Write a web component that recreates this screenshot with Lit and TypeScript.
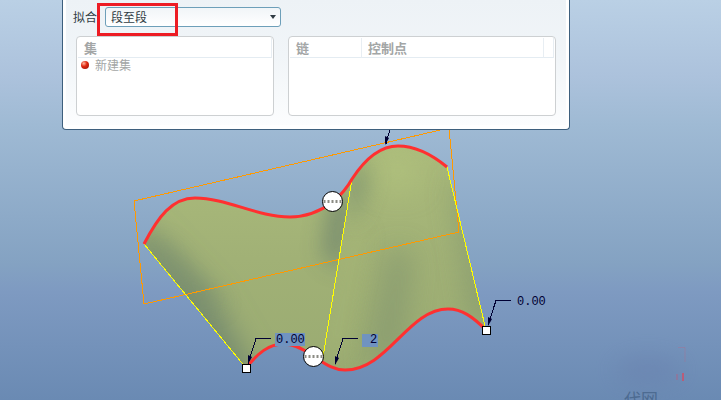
import { LitElement, html, svg, css } from "lit";
import { customElement } from "lit/decorators.js";

const TOP_CURVE =
  "M144 244 C158 217 172 198 195 198 C227 198 257 217 290 217 C309 217 322 210 333 202 C341 195 347 188 352 179 C365 159 381 146 398 146 C415 146 430 153 447 167";
const SURFACE =
  TOP_CURVE +
  " L486 330 C473 317 462 309 448 309 C408 309 388 371 345 371 C333 371 324 363 313 356 C305 350 296 344 284 344 C269 344 258 353 246 368 Z";

@customElement("model-view")
export class ModelView extends LitElement {
  static styles = css`
    :host {
      display: block;
    }
    .scene {
      display: block;
      width: 100%;
      height: auto;
      overflow: hidden;
    }
    .boundary {
      fill: none;
      stroke: #ff3030;
      stroke-width: 3;
    }
    .ruling {
      fill: none;
      stroke: #ffff00;
      stroke-width: 1;
      shape-rendering: crispEdges;
    }
    .plane {
      fill: none;
      stroke: #ff9900;
      stroke-width: 1;
      shape-rendering: crispEdges;
    }
    .leader {
      fill: none;
      stroke: #000033;
      stroke-width: 1;
      shape-rendering: crispEdges;
    }
    .head {
      fill: #000033;
    }
    .square {
      fill: #ffffff;
      stroke: #000000;
    }
    .knob {
      fill: #ffffff;
      stroke: #000000;
    }
    .dots {
      stroke: #8c8c84;
      stroke-width: 3;
      stroke-dasharray: 2 2;
    }
    .tag {
      fill: #7093c0;
    }
    .value {
      fill: #000033;
      font: 12px "Liberation Mono", monospace;
    }
    .mark {
      fill: #4d6b91;
      font: 17px "Noto Sans CJK SC", sans-serif;
    }
  `;

  private square(x: number, y: number) {
    return svg`<rect class="square" x=${x - 4} y=${y - 4} width="8" height="8"></rect>`;
  }

  private knob(x: number, y: number) {
    return svg`
      <circle class="knob" cx=${x} cy=${y} r="10"></circle>
      <path class="dots" d="M${x - 9} ${y}H${x + 9}"></path>`;
  }

  private arrow(x: number, y: number) {
    return svg`<path class="head" d="M${x} ${y}L${x} ${y - 9}L${x + 4} ${y - 7}Z"></path>`;
  }

  render() {
    return html`
      <svg class="scene" viewBox="0 0 721 400" role="img" aria-label="边界混合曲面">
        <defs>
          <clipPath id="surface"><path d=${SURFACE}></path></clipPath>
          <clipPath id="left"><path d="M100 150H357L323 357V400H100Z"></path></clipPath>
          <clipPath id="right"><path d="M357 150V120H520V400H316L352 179Z"></path></clipPath>
          <filter id="soft" x="-100%" y="-100%" width="300%" height="300%">
            <feGaussianBlur stdDeviation="14"></feGaussianBlur>
          </filter>
          <filter id="haze" x="-100%" y="-100%" width="300%" height="300%">
            <feGaussianBlur stdDeviation="11"></feGaussianBlur>
          </filter>
          <linearGradient id="base" x1="0" y1="0" x2="0" y2="1">
            <stop offset="0" stop-color="#abbb7b"></stop>
            <stop offset="0.5" stop-color="#a1b176"></stop>
            <stop offset="1" stop-color="#9aab72"></stop>
          </linearGradient>
        </defs>

        <g clip-path="url(#surface)">
          <path d=${SURFACE} fill="url(#base)"></path>
          <g clip-path="url(#left)">
            <path d="M120 226L150 232L214 300L262 384L230 400Z" fill="#768b6e" filter="url(#soft)"></path>
            <path d="M150 236L172 250L224 306L200 306Z" fill="#7c906f" opacity="0.7" filter="url(#haze)"></path>
            <path d="M330 200L356 190L344 270L322 256Z" fill="#768a6e" opacity="0.9" filter="url(#haze)"></path>
          </g>
          <g clip-path="url(#right)">
            <path d="M345 186L362 158L370 178L352 226Z" fill="#7c916e" opacity="0.8" filter="url(#haze)"></path>
            <path d="M390 248L412 252L400 350L366 372Z" fill="#84976f" opacity="0.8" filter="url(#soft)"></path>
            <path d="M452 180L466 180L496 330L474 322Z" fill="#80946e" opacity="0.8" filter="url(#soft)"></path>
            <path d="M382 150L412 150L418 190L380 190Z" fill="#b3c47f" opacity="0.6" filter="url(#soft)"></path>
            <path d="M350 230L364 230L340 360L326 352Z" fill="#a6b676" opacity="0.8" filter="url(#haze)"></path>
          </g>
        </g>

        <path class="plane" d="M134 201L449 128L459 232L144 304Z"></path>
        <path class="ruling" d="M144 244L246 368M352 179L323 357M447 167L486 330"></path>
        <path class="boundary" d=${TOP_CURVE}></path>
        <path
          class="boundary"
          d="M246 368C258 353 269 344 283 344C295 344 305 350 313 356C324 363 333 370 345 370C388 370 408 309 448 309C462 309 473 317 486 330"
        ></path>

        <rect class="tag" x="275" y="333" width="30" height="13"></rect>
        <rect class="tag" x="362" y="334" width="16" height="13"></rect>
        <path
          class="leader"
          d="M390 129L386 144M271 338.500H256L248 364M358 338.500H343L335 364M511 300.500H496L488 325"
        ></path>
        ${this.arrow(385, 145)} ${this.arrow(248, 364)} ${this.arrow(335, 365)}
        ${this.arrow(488, 326)}
        <text class="value" x="276" y="343">0.00</text>
        <text class="value" x="370" y="343">2</text>
        <text class="value" x="517" y="305">0.00</text>

        ${this.square(246.5, 368.5)} ${this.square(486.5, 330.5)}
        ${this.knob(332.5, 201.5)} ${this.knob(313.5, 356.5)}

        <ellipse cx="648" cy="370" rx="34" ry="14" fill="#6577a8" opacity="0.3" filter="url(#haze)"></ellipse>
        <path d="M678 347.500H685V362" fill="none" stroke="#b86888" stroke-opacity="0.35"></path>
        <path d="M677 374V380" fill="none" stroke="#c05878" stroke-width="2" stroke-opacity="0.35"></path>
        <path d="M683 373V381" fill="none" stroke="#d84860" stroke-width="2" stroke-opacity="0.7"></path>
        <text class="mark" x="624" y="406">代网</text>
      </svg>
    `;
  }
}

@customElement("fit-panel")
export class FitPanel extends LitElement {
  static styles = css`
    :host {
      display: block;
      box-sizing: border-box;
      padding: 0 3px 4px;
      border: 1px solid #3d5f7d;
      border-top: 0;
      border-radius: 0 0 4px 4px;
      background: #ffffff;
      font: 12px/16px "Noto Sans CJK SC", sans-serif;
      color: #303c44;
    }
    .body {
      padding: 7px 10px 9px;
      background: linear-gradient(#edf2f6, #f1f5f8 45%, #fcfdfe);
    }
    .field {
      position: relative;
      display: flex;
      align-items: center;
      gap: 8px;
    }
    .label {
      flex: none;
      margin-left: -3px;
    }
    .combo {
      position: relative;
      width: 176px;
    }
    .combo::after {
      content: "";
      position: absolute;
      right: 5px;
      top: 8px;
      border: 3px solid transparent;
      border-top: 4px solid #303c44;
      border-bottom: 0;
      pointer-events: none;
    }
    .select {
      display: block;
      box-sizing: border-box;
      width: 100%;
      height: 20px;
      padding: 0 16px 0 5px;
      border: 1px solid #6d9fb9;
      border-radius: 3px;
      appearance: none;
      background: linear-gradient(#f1f5f8, #ffffff);
      color: inherit;
      font: inherit;
    }
    .highlight {
      position: absolute;
      left: -8px;
      top: -4px;
      width: 75px;
      height: 27px;
      border: 3px solid #ed1c24;
      pointer-events: none;
    }
    .lists {
      display: grid;
      grid-template-columns: 198fr 268fr;
      gap: 14px;
      margin-top: 9px;
    }
    .list {
      box-sizing: border-box;
      min-height: 80px;
      padding: 1px;
      border: 1px solid #cdd0d2;
      border-radius: 4px;
      background: #ffffff;
    }
    .table {
      width: 100%;
      border-collapse: separate;
      border-spacing: 0;
      table-layout: fixed;
      color: #a3a6a6;
    }
    .head {
      box-sizing: border-box;
      height: 20px;
      padding: 0 0 0 6px;
      border-right: 1px solid #e8eef3;
      border-bottom: 1px solid #e4ecf2;
      font-size: 13px;
      line-height: 16px;
      text-align: left;
      font-weight: 700;
    }
    .chain {
      width: 72px;
    }
    .spare {
      width: 10px;
      padding: 0;
    }
    .cell {
      padding: 0 0 0 3px;
      line-height: 14px;
    }
    .item {
      display: flex;
      align-items: center;
      gap: 6px;
    }
    .dot {
      width: 8px;
      height: 8px;
      border-radius: 50%;
      background: radial-gradient(circle at 35% 30%, #ffb8a0, #e02810 40%, #8c1008);
    }
  `;

  render() {
    return html`
      <div class="body">
        <div class="field">
          <label class="label" for="fit">拟合</label>
          <div class="combo">
            <select class="select" id="fit">
              <option>段至段</option>
            </select>
            <div class="highlight"></div>
          </div>
        </div>
        <div class="lists">
          <div class="list">
            <table class="table">
              <thead>
                <tr><th class="head">集</th></tr>
              </thead>
              <tbody>
                <tr>
                  <td class="cell"><div class="item"><span class="dot"></span>新建集</div></td>
                </tr>
              </tbody>
            </table>
          </div>
          <div class="list">
            <table class="table">
              <thead>
                <tr>
                  <th class="head chain">链</th>
                  <th class="head">控制点</th>
                  <td class="head spare"></td>
                </tr>
              </thead>
            </table>
          </div>
        </div>
      </div>
    `;
  }
}

@customElement("app-root")
export class AppRoot extends LitElement {
  static styles = css`
    :host {
      display: grid;
      grid-template-columns: 62fr 508fr 151fr;
      align-items: start;
      min-height: 100vh;
      background: linear-gradient(#bad0e5, #acc2dc 19%, #9fbad4 31%, #84a2c2 66%, #7e9ac1 73%, #6a8ab3);
    }
    .view {
      grid-area: 1 / 1 / 2 / 4;
    }
    .panel {
      grid-area: 1 / 2;
      z-index: 1;
    }
  `;

  render() {
    return html`
      <model-view class="view"></model-view>
      <fit-panel class="panel"></fit-panel>
    `;
  }
}
